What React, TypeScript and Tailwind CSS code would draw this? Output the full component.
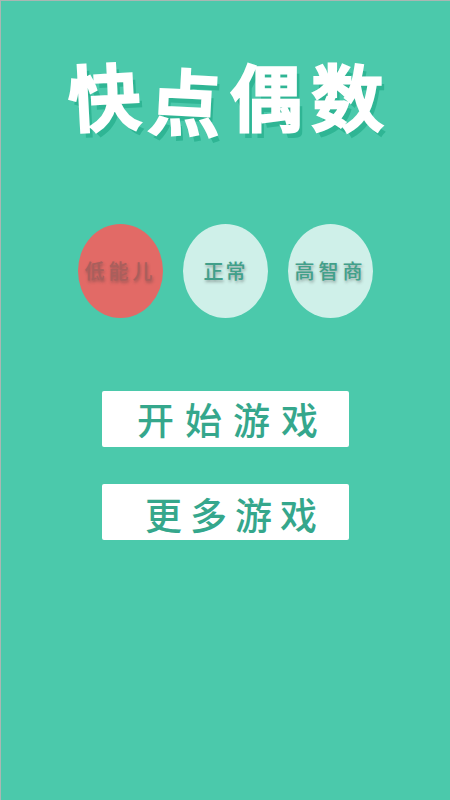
const font = "font-['Noto_Sans_CJK_SC',sans-serif]";

function Level({ label, active, track }: { label: string; active?: boolean; track: string }) {
  return (
    <div
      className={`flex h-[94px] w-[85px] items-center justify-center rounded-[50%] ${
        active ? 'bg-[#e26a66] text-[#a95f5c]' : 'bg-[#cff0e9] text-[#41a08a]'
      }`}
    >
      <span className={`text-[20px] leading-none font-medium whitespace-nowrap [text-shadow:1px_2px_3px_rgba(60,60,60,0.4)] ${track}`}>
        {label}
      </span>
    </div>
  );
}

function MenuButton({ label, pad }: { label: string; pad: string }) {
  return (
    <button className={`flex h-14 w-[247px] items-center rounded-[2px] bg-white ${pad}`}>
      <span className="text-[37px] leading-none font-medium whitespace-nowrap text-[#35a78c]">{label}</span>
    </button>
  );
}

export default function App() {
  return (
    <div className={`flex h-[800px] w-[450px] flex-col items-center border-t border-l border-[#a9b7b3] bg-[#4bc9ab] ${font}`}>
      {/* Title */}
      <div className="mt-[50px] flex h-[90px] w-[316px] items-center justify-between text-[72px] leading-none font-medium text-white [-webkit-text-stroke:3px_white] [text-shadow:4px_6px_0_#2fb594]">
        <span className="-translate-y-[2px] -rotate-3">快</span>
        <span className="translate-y-[3px] rotate-3">点</span>
        <span className="-translate-y-[2px]">偶</span>
        <span className="-translate-y-[2px]">数</span>
      </div>

      {/* Level picker */}
      <div className="mt-[83px] flex gap-[20px]">
        <Level label="低能儿" active track="tracking-[4px]" />
        <Level label="正常" track="tracking-[2px]" />
        <Level label="高智商" track="tracking-[4px]" />
      </div>

      {/* Menu */}
      <div className="mt-[73px] flex flex-col gap-[37px]">
        <MenuButton label="开始游戏" pad="pl-[35px] tracking-[11px]" />
        <MenuButton label="更多游戏" pad="pl-[43px] pt-[4px] tracking-[8px]" />
      </div>
    </div>
  );
}
